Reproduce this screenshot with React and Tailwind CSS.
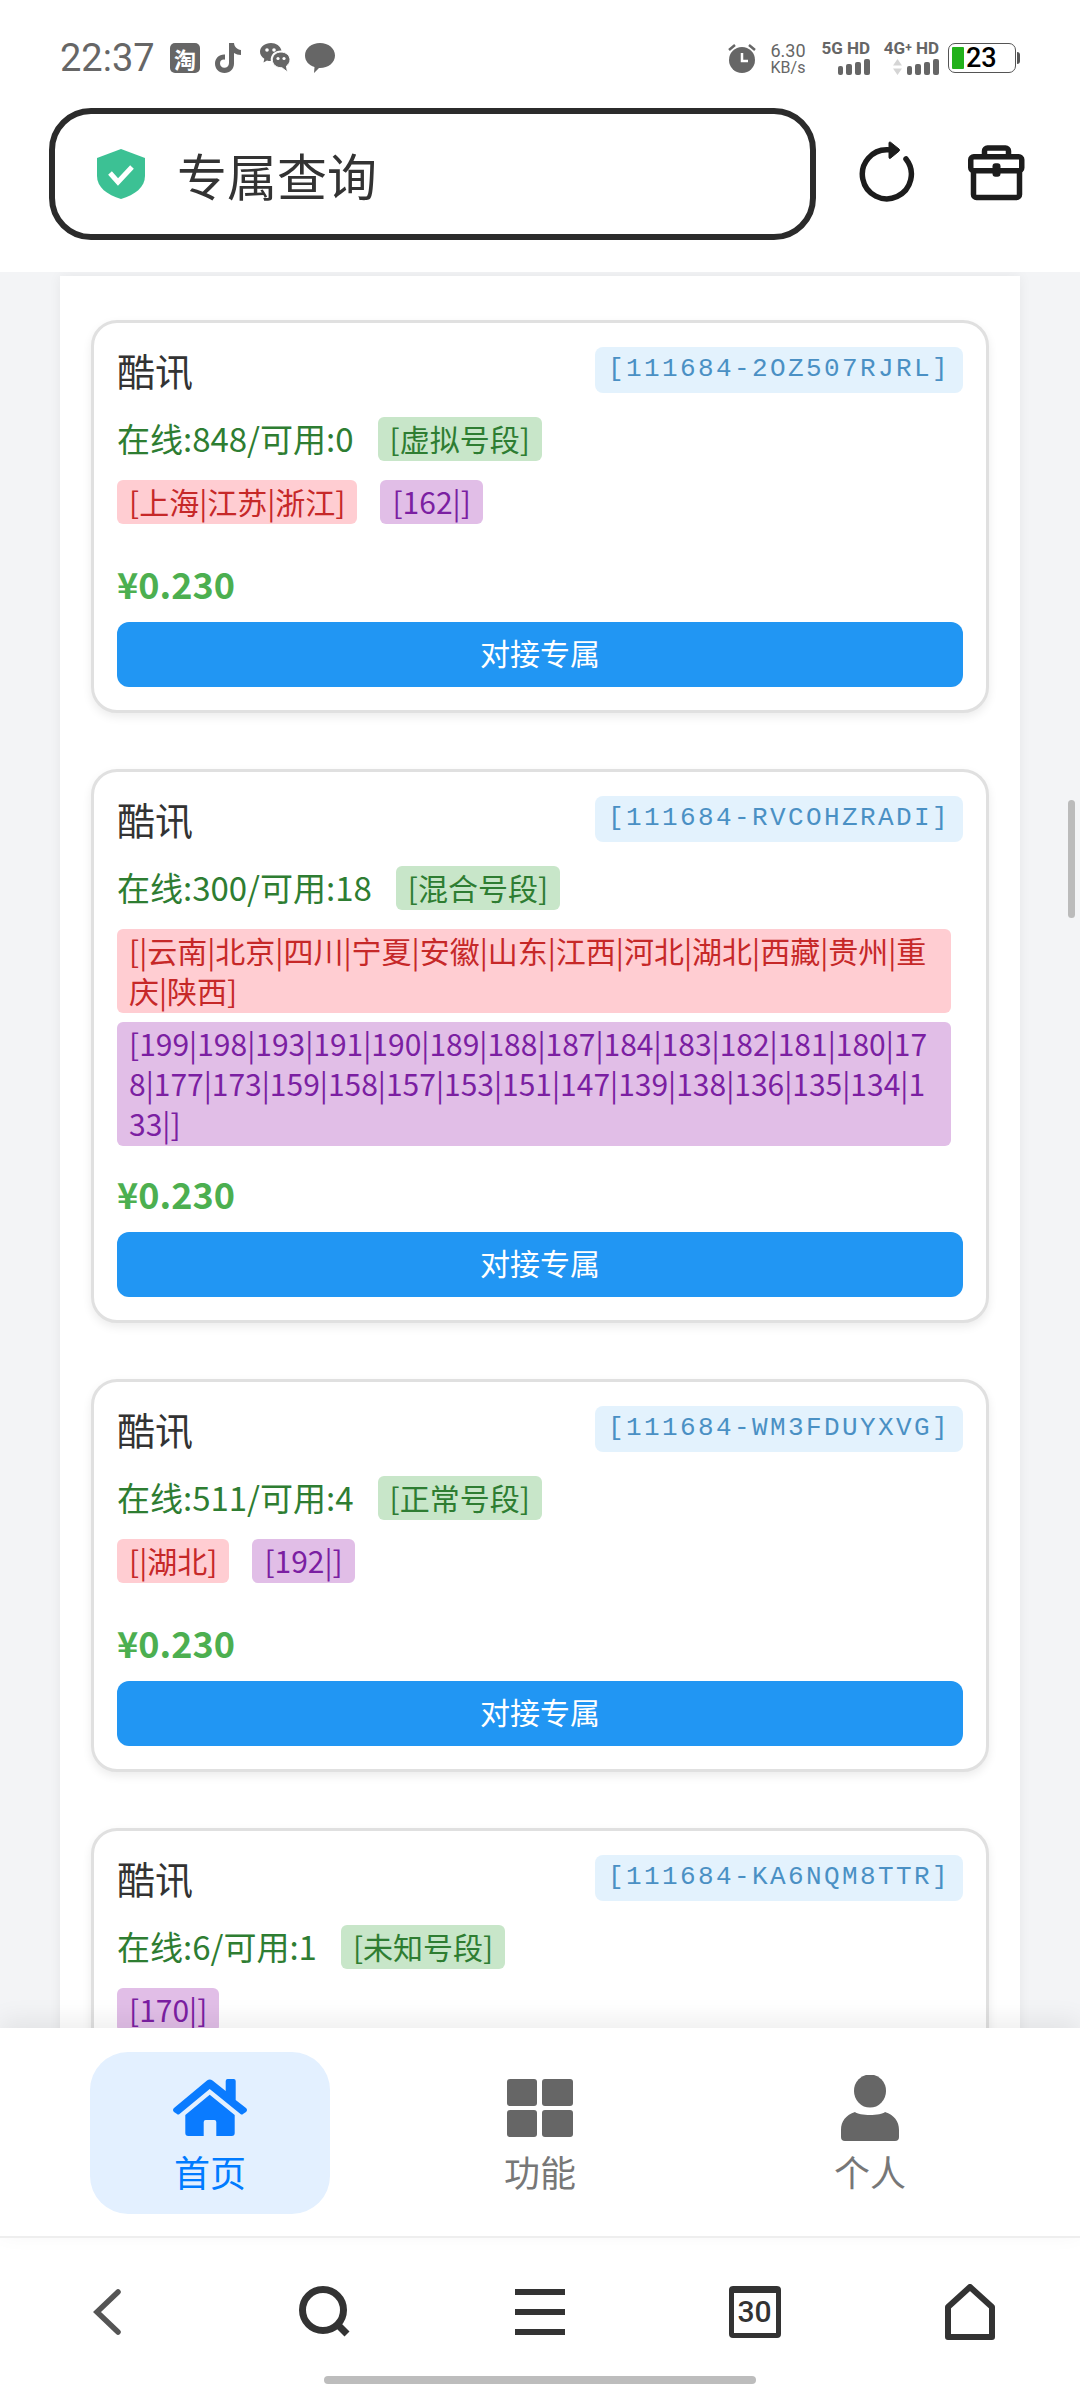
const cards = [
  { code: '[111684-2OZ507RJRL]', online: '在线:848/可用:0', kind: '[虚拟号段]', region: '[上海|江苏|浙江]', seg: '[162|]' },
  {
    code: '[111684-RVCOHZRADI]',
    online: '在线:300/可用:18',
    kind: '[混合号段]',
    region: '[|云南|北京|四川|宁夏|安徽|山东|江西|河北|湖北|西藏|贵州|重庆|陕西]',
    seg: '[199|198|193|191|190|189|188|187|184|183|182|181|180|178|177|173|159|158|157|153|151|147|139|138|136|135|134|133|]',
    wide: true,
  },
  { code: '[111684-WM3FDUYXVG]', online: '在线:511/可用:4', kind: '[正常号段]', region: '[|湖北]', seg: '[192|]' },
  { code: '[111684-KA6NQM8TTR]', online: '在线:6/可用:1', kind: '[未知号段]', seg: '[170|]' },
];

function Signal() {
  return (
    <div className="flex items-end gap-[3px]">
      <div className="w-[5px] h-[9px] rounded-[2px] bg-[#666]" />
      <div className="w-[6px] h-[11px] rounded-[2px] bg-[#666]" />
      <div className="w-[6px] h-[13px] rounded-[2px] bg-[#666]" />
      <div className="w-[6px] h-[16px] rounded-[2px] bg-[#666]" />
    </div>
  );
}

function StatusBar() {
  return (
    <div className="h-[88px] flex items-center justify-between pl-[60px] pr-[60px] pt-[28px] text-[#666]">
      <div className="flex items-center">
        <span className="text-[38px] leading-none font-['Roboto',sans-serif] w-[110px]">22:37</span>
        <div className="w-[30px] h-[30px] rounded-[5px] bg-[#666] text-white text-[22px] leading-[30px] text-center font-bold">淘</div>
        <svg className="ml-[15px]" width="28" height="30" viewBox="0 0 28 30" fill="#666">
          <path d="M14 0h5c.4 4 3 6.500 7 7v5c-2.800 0-5-.8-7-2v10.500C19 26 15 30 9.500 30 4 30 0 26 0 20.500 0 15 4.500 11 10 11.500v5.200c-3-.6-5 1.200-5 3.800 0 2.400 2 4.300 4.300 4.300 2.700 0 4.700-2 4.700-4.800z" />
        </svg>
        <svg className="ml-[17px]" width="30" height="30" viewBox="0 0 30 30" fill="#666">
          <path d="M11 0c5 0 9.500 3 10.500 7.500C15 7.300 10 11.500 10.800 18c-1.500 0-2.700-.2-3.800-.6L3.500 19.500l.8-3.800C1.500 13.800 0 11.500 0 8.800 0 3.800 5 0 11 0z" />
          <path d="M21 9c5 0 9 3.500 9 7.800 0 2.600-1.400 4.600-3.500 6.200l.9 6-5.400-4.200C16.500 25 12.300 21.500 12.300 16.800 12.300 12.500 16 9 21 9z" stroke="#fff" strokeWidth="1" />
          <circle cx="7" cy="7" r="1.800" fill="#fff" />
          <circle cx="14" cy="7" r="1.800" fill="#fff" />
          <circle cx="18" cy="15.500" r="1.600" fill="#fff" />
          <circle cx="24" cy="15.500" r="1.600" fill="#fff" />
        </svg>
        <svg className="ml-[15px]" width="30" height="30" viewBox="0 0 30 30" fill="#666">
          <path d="M15 0c8.300 0 15 5.400 15 12.500S23.300 25 15 25h-1l-5 5 .5-6C3.800 22.300 0 18 0 12.500 0 5.400 6.700 0 15 0z" />
        </svg>
      </div>
      <div className="flex items-center">
        <svg width="30" height="30" viewBox="0 0 30 30">
          <circle cx="15" cy="17" r="13" fill="#666" />
          <path d="M15 10v8h6" fill="none" stroke="#fff" strokeWidth="2.500" />
          <path d="M2 7l6-5M28 7l-6-5" stroke="#666" strokeWidth="2.500" />
        </svg>
        <div className="ml-[11px] w-[40px] flex flex-col items-center font-['Roboto',sans-serif] leading-none">
          <span className="text-[18px] leading-[18px]">6.30</span>
          <span className="text-[16px] leading-[15px]">KB/s</span>
        </div>
        <div className="ml-[14px] w-[48px] flex flex-col items-end font-['Roboto',sans-serif] font-bold leading-none gap-[3px]">
          <span className="text-[17px] leading-[15px] whitespace-nowrap">5G HD</span>
          <Signal />
        </div>
        <div className="ml-[11px] w-[58px] flex flex-col items-end font-['Roboto',sans-serif] font-bold leading-none gap-[3px]">
          <span className="text-[17px] leading-[15px] whitespace-nowrap">4G<span className="text-[12px] align-top">+</span> HD</span>
          <div className="flex items-end">
            <svg className="mr-[5px]" width="9" height="16" viewBox="0 0 9 16" fill="#d5d5d5">
              <path d="M4.500 0L9 6.500H0zM4.500 16L9 9.500H0z" />
            </svg>
            <Signal />
          </div>
        </div>
        <div className="ml-[9px] w-[68px] h-[30px] rounded-[7px] border border-[#555] flex items-center pl-[3px]">
          <div className="w-[12px] h-[22px] bg-[#22b11b] rounded-[1px]" />
          <span className="ml-[2px] text-[27px] leading-none text-black font-medium font-['Roboto',sans-serif]">23</span>
        </div>
        <div className="ml-[1px] w-[3px] h-[12px] bg-[#555] rounded-r-sm" />
      </div>
    </div>
  );
}

function Header() {
  return (
    <div className="bg-white h-[184px] flex items-start pl-[49px] pt-[20px]">
      <div className="w-[767px] h-[132px] border-[6px] border-[#2b2b2b] rounded-[42px] flex items-center pl-[42px]">
        <svg width="48" height="50" viewBox="0 0 48 50">
          <path d="M24 0l24 9v18c0 11-10 19-24 23C10 46 0 38 0 27V9z" fill="#3cc194" />
          <path d="M13 24l8 9 14-15" fill="none" stroke="#fff" strokeWidth="5" />
        </svg>
        <span className="ml-[32px] text-[50px] leading-none text-[#333]">专属查询</span>
      </div>
      <svg className="ml-[42px] mt-[32px]" width="60" height="64" viewBox="0 0 60 64" fill="none">
        <path d="M48 19A24.500 24.500 0 1 1 30 9.800" stroke="#1c1c1c" strokeWidth="5.500" strokeLinecap="round" />
        <path d="M31 3a1 1 0 0 1 1.500-.8L41 9a1.500 1.500 0 0 1 0 2.200l-8.500 7a1 1 0 0 1-1.500-.8z" fill="#1c1c1c" stroke="#1c1c1c" strokeWidth="1" />
      </svg>
      <svg className="ml-[50px] mt-[37px]" width="57" height="56" viewBox="0 0 57 56" fill="none" stroke="#1c1c1c" strokeWidth="5.500">
        <rect x="2.750" y="11.700" width="51" height="14" rx="3" />
        <path d="M5.500 26v23.500a3 3 0 0 0 3 3h40a3 3 0 0 0 3-3V26" />
        <path d="M16.500 11V6a3 3 0 0 1 3-3h18a3 3 0 0 1 3 3v5" />
        <rect x="24.500" y="18.300" width="8" height="13.400" rx="3" fill="#1c1c1c" strokeWidth="0" />
      </svg>
    </div>
  );
}

function Card({ card }) {
  return (
    <div className="rounded-[26px] border-[3px] border-[#e0e0e0] bg-white px-[23px] pt-[24px] pb-[23px] shadow-[0_4px_10px_rgba(0,0,0,0.08)]">
      <div className="flex items-start justify-between">
        <span className="text-[38px] leading-[46px] text-[#333]">酷讯</span>
        <span className="h-[46px] px-[13px] rounded-[8px] bg-[#e3f2fd] text-[#4a90c4] text-[26px] leading-[44px] tracking-[2.400px] font-['Liberation_Mono',monospace]">{card.code}</span>
      </div>
      <div className="mt-[24px] flex items-center">
        <span className="pb-[2px] text-[33px] leading-[42px] text-[#2e7d32]">{card.online}</span>
        <span className="ml-[24px] px-[12px] pb-[2px] rounded-[6px] bg-[#c8e6c9] text-[#2e7d32] text-[30px] leading-[42px]">{card.kind}</span>
      </div>
      <div className="mt-[19px] flex flex-wrap gap-x-[11px] gap-y-[9px]">
        {card.region && (
          <span className="mr-[12px] px-[12px] pt-[1px] pb-[3px] rounded-[6px] bg-[#ffcdd2] text-[#c62828] text-[30px] leading-[40px] break-all">{card.region}</span>
        )}
        <span className="mr-[12px] px-[12px] pt-[1px] pb-[3px] rounded-[6px] bg-[#e1bee7] text-[#7b1fa2] text-[30px] leading-[40px] break-all">{card.seg}</span>
      </div>
      <div className={`${card.wide ? 'mt-[22px]' : 'mt-[34px]'} text-[36px] leading-[50px] font-bold text-[#4caf50]`}>¥0.230</div>
      <div className="mt-[14px] h-[65px] rounded-[12px] bg-[#2196f3] text-white text-[30px] leading-[61px] text-center">对接专属</div>
    </div>
  );
}

function BottomNav() {
  return (
    <div className="relative z-10 h-[210px] bg-white border-b-[2px] border-[#eeeeee] shadow-[0_-8px_24px_rgba(0,0,0,0.07)] flex justify-around pt-[24px] px-[45px]">
      <div className="w-[240px] h-[162px] rounded-[38px] bg-[#e3f0ff] flex flex-col items-center text-[#007bff]">
        <svg className="mt-[27px]" width="74" height="58" viewBox="0 0 74 58" fill="#0a7bff">
          <path d="M34 1.500Q36.700-.5 39.500 1.500L52.700 12V2a2 2 0 0 1 2-2h6a2 2 0 0 1 2 2V21L73 29Q75 31 73 33L70 35Q69 36 67.500 35L36.700 10 6.500 35Q5 36 4 35L1 33Q-1 31 1 29z" />
          <path d="M36.700 15.700L61.700 36V54a3 3 0 0 1-3 3H43.300V43a2 2 0 0 0-2-2H32.700a2 2 0 0 0-2 2V57H15.300a3 3 0 0 1-3-3V36z" />
        </svg>
        <span className="mt-[12px] text-[36px] leading-[44px]">首页</span>
      </div>
      <div className="w-[240px] flex flex-col items-center text-[#777]">
        <svg className="mt-[27px]" width="66" height="58" viewBox="0 0 66 58" fill="#666">
          <rect width="30" height="27" rx="3" />
          <rect x="35" width="31" height="27" rx="3" />
          <rect y="31" width="30" height="27" rx="3" />
          <rect x="35" y="31" width="31" height="27" rx="3" />
        </svg>
        <span className="mt-[12px] text-[36px] leading-[44px]">功能</span>
      </div>
      <div className="w-[240px] flex flex-col items-center text-[#777]">
        <svg className="mt-[23px]" width="58" height="66" viewBox="0 0 58 66" fill="#666">
          <ellipse cx="29" cy="16" rx="16" ry="16.500" />
          <path d="M14 37c4 4 26 4 30 0 9 3 14 9 14 18v7a4 4 0 0 1-4 4H4a4 4 0 0 1-4-4v-7c0-9 5-15 14-18z" />
        </svg>
        <span className="mt-[8px] text-[36px] leading-[44px]">个人</span>
      </div>
    </div>
  );
}

function BrowserBar() {
  return (
    <div className="h-[150px] bg-white flex flex-col items-center">
      <div className="w-full h-[138px] grid grid-cols-5 items-center justify-items-center pl-[2px] pr-[3px] pt-[10px]">
        <svg className="-ml-[6px]" width="28" height="46" viewBox="0 0 28 46" fill="none" stroke="#555" strokeWidth="5.500" strokeLinecap="round">
          <path d="M25 3L4 23l21 20" />
        </svg>
        <svg width="52" height="52" viewBox="0 0 52 52" fill="none" stroke="#333" strokeWidth="7">
          <circle cx="24" cy="24" r="20.500" />
          <path d="M37 37l11 11" />
        </svg>
        <svg width="50" height="46" viewBox="0 0 50 46" fill="#333">
          <rect width="50" height="6" />
          <rect y="20" width="50" height="6" />
          <rect y="40" width="50" height="6" />
        </svg>
        <div className="w-[52px] h-[52px] border-[5px] border-t-[7px] border-[#333] rounded-[4px] text-[#333] text-[30px] leading-[38px] text-center font-['Roboto',sans-serif] font-medium">30</div>
        <svg width="50" height="56" viewBox="0 0 50 56" fill="none" stroke="#333" strokeWidth="6" strokeLinejoin="round">
          <path d="M25 3L47 23V53H3V23z" />
        </svg>
      </div>
      <div className="w-[432px] h-[8px] rounded-full bg-[#bdbdbd]" />
    </div>
  );
}

export default function App() {
  return (
    <div className="relative w-[1080px] h-[2388px] overflow-hidden flex flex-col bg-white font-['Noto_Sans_CJK_SC','Noto_Sans',sans-serif]">
      <StatusBar />
      <Header />
      <div className="flex-1 min-h-0 overflow-hidden bg-[#f3f4f6] pt-[4px] px-[60px]">
        <div className="bg-white shadow-[0_0_12px_rgba(0,0,0,0.06)] px-[31px] pt-[44px] flex flex-col gap-[56px]">
          {cards.map((card) => (
            <Card key={card.code} card={card} />
          ))}
        </div>
      </div>
      <BottomNav />
      <BrowserBar />
      {/* page scrollbar */}
      <div className="absolute left-[1068px] top-[800px] w-[7px] h-[118px] rounded-full bg-[#bbbbbb]" />
    </div>
  );
}
